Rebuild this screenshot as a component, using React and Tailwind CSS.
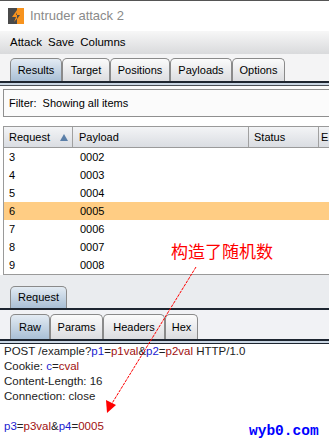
import React from "react";

const rows = [
  ["3", "0002"],
  ["4", "0003"],
  ["5", "0004"],
  ["6", "0005"],
  ["7", "0006"],
  ["8", "0007"],
  ["9", "0008"],
];

function Tab({ label, selected, w }) {
  return (
    <div
      className={
        "h-full flex items-center justify-center border border-b-0 border-[#8a8a8a] rounded-t-[5px] text-[11px] text-black " +
        (selected
          ? "bg-gradient-to-b from-[#e3ebf3] to-[#a9bfd5]"
          : "bg-gradient-to-b from-[#fbfbfb] to-[#dcdde0]")
      }
      style={{ width: w }}
    >
      {label}
    </div>
  );
}

export default function App() {
  return (
    <div
      className="relative w-[329px] h-[443px] overflow-hidden bg-white text-black"
      style={{ fontFamily: '"Liberation Sans", Arial, sans-serif' }}
    >
      {/* Title bar */}
      <div className="h-[31px] flex items-center pl-[8px] gap-[6px] bg-white border-t border-[#555]">
        <svg width="16" height="16" viewBox="0 0 16 16">
          <rect x="0" y="0" width="9" height="16" fill="#4a4a4a" />
          <rect x="9" y="0" width="7" height="16" fill="#f7931e" />
          <polygon points="9,2 4,9 8,9 6,14 12,7 8,7 10,2" fill="#f7931e" />
          <polygon points="9,7 12,7 9,11" fill="#4a4a4a" />
        </svg>
        <span className="text-[13px] text-[#8a8a8a]">Intruder attack 2</span>
      </div>

      {/* Menu bar */}
      <div className="h-[23px] flex items-center pl-[10px] gap-[6px] text-[11.5px] bg-gradient-to-b from-[#f7f7f7] to-[#d9dadc]">
        <span>Attack</span>
        <span>Save</span>
        <span>Columns</span>
      </div>

      {/* Main tabs */}
      <div className="h-[27px] pt-[4px] pl-[10px] flex items-end bg-[#f4f4f5]">
        <Tab label="Results" selected w={52} />
        <Tab label="Target" w={48} />
        <Tab label="Positions" w={60} />
        <Tab label="Payloads" w={62} />
        <Tab label="Options" w={53} />
      </div>
      <div className="h-[2px] bg-[#1d2530]" />
      <div className="h-[2px] bg-[#c9d5e2]" />
      <div className="h-[1px] bg-[#4a4f55]" />

      {/* Filter */}
      <div className="pt-[3px] pl-[3px] bg-[#fbfbfb]">
        <div className="h-[28px] border border-r-0 border-[#8f8f8f] bg-[#fbfbfb] flex items-center pl-[5px] text-[11px]">
          Filter:&nbsp; Showing all items
        </div>
      </div>

      {/* Table */}
      <div className="pt-[9px] pl-[3px] bg-white">
        <div className="border-l border-b border-[#9a9a9a]">
          <div className="h-[22px] flex text-[11px] bg-gradient-to-b from-[#f3f4f6] to-[#dadde2] border-t border-b border-[#9a9a9a]">
            <div className="w-[69px] flex items-center pl-[5px] border-r border-[#a0a0a0] relative">
              Request
              <svg className="absolute left-[56px] top-[7px]" width="8" height="7" viewBox="0 0 8 7">
                <polygon points="4,0 8,7 0,7" fill="#5b7fa8" />
              </svg>
            </div>
            <div className="w-[176px] flex items-center pl-[6px] border-r border-[#a0a0a0]">Payload</div>
            <div className="w-[70px] flex items-center pl-[5px] border-r border-[#a0a0a0]">Status</div>
            <div className="flex-1 flex items-center pl-[2px]">E</div>
          </div>
          {rows.map(([r, p]) => (
            <div
              key={r}
              className={"h-[18px] flex items-center text-[11px] " + (r === "6" ? "bg-[#ffcd84]" : "bg-white")}
            >
              <div className="w-[69px] pl-[5px]">{r}</div>
              <div className="pl-[7px]">{p}</div>
            </div>
          ))}
        </div>
      </div>

      {/* Bottom panel */}
      <div className="bg-[#eaecef] pt-[11px] pl-[10px] h-[33px] flex items-end">
        <div className="h-[22px]">
          <Tab label="Request" selected w={57} />
        </div>
      </div>
      <div className="h-[2px] bg-[#1d2530]" />
      <div className="h-[4px] bg-[#f1f2f5]" />
      <div className="h-[25px] pl-[10px] flex items-end bg-[#f1f2f5]">
        <Tab label="Raw" selected w={40} />
        <Tab label="Params" w={53} />
        <Tab label="Headers" w={62} />
        <Tab label="Hex" w={33} />
      </div>
      <div className="h-[2px] bg-[#1d2530]" />
      <div className="h-[2px] bg-[#c9d5e2]" />
      <div className="h-[1px] bg-[#1d2530]" />

      {/* Raw text */}
      <div className="pl-[4px] text-[11.5px] leading-[15px] text-[#222]">
        <div>
          POST /example?<span className="text-[#1a1ad0]">p1</span>=<span className="text-[#a01010]">p1val</span>&amp;<span className="text-[#1a1ad0]">p2</span>=<span className="text-[#a01010]">p2val</span> HTTP/1.0
        </div>
        <div>
          Cookie: <span className="text-[#1a1ad0]">c</span>=<span className="text-[#a01010]">cval</span>
        </div>
        <div>Content-Length: 16</div>
        <div>Connection: close</div>
        <div>&nbsp;</div>
        <div>
          <span className="text-[#1a1ad0]">p3</span>=<span className="text-[#a01010]">p3val</span>&amp;<span className="text-[#1a1ad0]">p4</span>=<span className="text-[#a01010]">0005</span>
        </div>
      </div>

      {/* Annotation */}
      <div
        className="absolute left-[171px] top-[241px] text-[17px] leading-[20px] text-[#ff0000]"
        style={{ fontFamily: '"Noto Sans CJK SC", sans-serif' }}
      >
        构造了随机数
      </div>
      <svg className="absolute left-0 top-0 pointer-events-none" width="329" height="443">
        <line x1="196" y1="267" x2="111" y2="405" stroke="#ff0000" strokeWidth="1" strokeDasharray="3 1" />
        <polygon points="107,413 106,400 116,405" fill="#ff0000" />
      </svg>

      {/* Watermark */}
      <div
        className="absolute left-[249px] top-[422px] text-[14.5px] font-bold text-[#0000ff] leading-[18px]"
        style={{ fontFamily: '"Liberation Mono", "Courier New", monospace' }}
      >
        wyb0.com
      </div>
    </div>
  );
}
